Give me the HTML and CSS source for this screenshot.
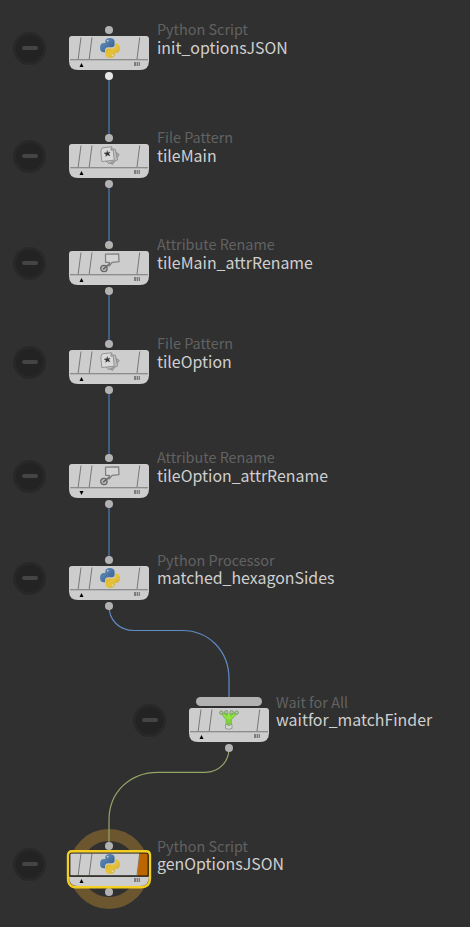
FILE: index.html
```html
<!DOCTYPE html>
<html lang="en">
<head>
<meta charset="utf-8">
<title>Node network</title>
<link rel="stylesheet" href="styles.css">
</head>
<body>
<svg class="defs" width="0" height="0">
  <defs>
    <linearGradient id="blue" x1="0" y1="0" x2="1" y2="1"><stop offset="0" stop-color="#3d689b"/><stop offset=".35" stop-color="#5680ad"/><stop offset="1" stop-color="#31588a"/></linearGradient>
    <linearGradient id="gold" x1="0" y1="0" x2="1" y2="1"><stop offset="0" stop-color="#dcae20"/><stop offset=".5" stop-color="#e6c33a"/><stop offset="1" stop-color="#c6a445"/></linearGradient>
    <symbol id="body" viewBox="0 0 80 34">
      <path d="M3 0H77Q80 0 80 3V25Q80 34 71 34H9Q0 34 0 25V3Q0 0 3 0Z" fill="#cdcdcd"/>
      <path d="M12 1.5 9.2 23M23 1.5 20.2 23M70.700 1.500 68 23" stroke="#777" stroke-width="1"/>
      <path d="M1 23.700H79" stroke="#777" stroke-width="1.100"/>
      <path d="M65 26h2v4h-2zM67.600 26h1.400v4h-1.400zM69.600 26h1.400v4h-1.400z" fill="#7c7c7c"/>
    </symbol>
    <symbol id="python" viewBox="0 0 20 20">
      <path d="M9.800 0C7 0 5.300 1.300 5.300 3.500V5H4C1.600 5 0 6.800 0 9.800S1.500 14.300 3.800 14.300H5V12.500C5 10.400 6.300 9.200 8.400 9.200H12C13.600 9.200 14.600 8 14.600 6.400V3.500C14.600 1.300 12.600 0 9.800 0Z" fill="url(#blue)"/>
      <path d="M10.200 20C13 20 14.900 18.700 14.900 16.500V15H16C18.500 15 20 13.200 20 10.200S18.500 5.400 16.200 5.400H15.300V7.500C15.300 9.400 13.900 10.600 11.800 10.600H8.200C6.600 10.600 5.500 11.700 5.500 13.300V16.500C5.500 18.700 7.400 20 10.200 20Z" fill="url(#gold)"/>
      <circle cx="7.700" cy="2.700" r=".9" fill="#bacbdc"/><circle cx="12.500" cy="17.300" r=".9" fill="#eee2b0"/>
    </symbol>
    <symbol id="files" viewBox="0 0 20 20">
      <g stroke="#858585" stroke-width=".8">
        <path d="M10 2 19.200 8.500 12.500 18.500 5 14Z" fill="#aaa"/>
        <path d="M6 1.500 15.500 3.500 17.500 14 8.500 17.500 5 14Z" fill="#bebebe"/>
        <path d="M2.300 1.800 11.500.8 13.200 4 14.200 14.200 1.800 15.500 .8 5Z" fill="#dadada"/>
        <path d="M11.500.8 10.800 4.200 13.200 4" fill="#bbb"/>
      </g>
      <path d="M7.300 4.400 7.900 6.700 10.200 6 8.800 7.800 10 9.900 7.500 8.900 5.600 10.400 6 8.200 4 7 6.500 6.700Z" fill="#333" stroke="#333" stroke-width=".3"/>
    </symbol>
    <symbol id="rename" viewBox="0 0 20 20">
      <path d="M4.200 15.500 10.200 10.200" stroke="#6b6b6b" stroke-width="1.600"/>
      <path d="M5.500 1.200 18.600.8 19 8.600 12.300 9.300 9 13 9.500 9.300 5.600 9.300Z" fill="#d4d4d4" stroke="#808080" stroke-width="1.300" stroke-linejoin="round"/>
      <circle cx="3.900" cy="15.500" r="3.200" fill="#b5b5b5" stroke="#666" stroke-width="1.300"/>
      <path d="M3.200 16.200 6 13.800" stroke="#555" stroke-width="1.200"/>
    </symbol>
    <symbol id="wait" viewBox="0 0 20 20">
      <path d="M2 3.500 7 9.500V14.500H12.500V9.500L18 3.500 15 3 12 4H8L5 3Z" fill="#80d639" stroke="#72b34a" stroke-width=".7"/>
      <path d="M4.500 4.500 9 9 9.600 4 10.500 9 15.500 4.500" fill="none" stroke="#a1ed50" stroke-width="1"/>
      <g fill="#b4c9a9" stroke="#6f8f60" stroke-width=".8"><circle cx="2.300" cy="2.600" r="1.700"/><circle cx="7.200" cy="2.300" r="1.700"/><circle cx="12.700" cy="2.300" r="1.700"/><circle cx="17.700" cy="2.600" r="1.700"/></g>
      <path d="M6.500 14.500H13V18.500Q9.800 20 6.500 18.500Z" fill="#d2d7cf" stroke="#87907f" stroke-width=".8"/>
      <path d="M8.500 12.500H11V16H8.500Z" fill="#80bd55"/>
    </symbol>
  </defs>
</svg>
<main class="canvas">
  <svg class="wires" width="470" height="927" viewBox="0 0 470 927">
    <circle class="halo" cx="109" cy="869" r="34"/>
    <g class="straight"><path d="M109 76V137M109 184V245M109 291V344M109 390V458M109 504V560"/></g>
    <path class="blue" d="M109 606C109 620 119 630.500 134 630.500H182C209 630.500 229 651 229 679V699"/>
    <path class="green" d="M229 748C229 762 219 772.300 205 772.300H158C130 772.300 109 792 109 820V846"/>
  </svg>

  <section class="node n1 ready">
    <i class="bypass"></i><i class="port in"></i><i class="port out"></i>
    <svg class="shape" width="80" height="34"><use href="#body"/><path d="M12.500 27 14.500 31H10.500Z"/></svg>
    <svg class="icon" width="20" height="20"><use href="#python"/></svg>
    <div class="label"><div class="type">Python Script</div><div class="name">init_optionsJSON</div></div>
  </section>
  <section class="node n2">
    <i class="bypass"></i><i class="port in"></i><i class="port out"></i>
    <svg class="shape" width="80" height="34"><use href="#body"/><path d="M12.500 27 14.500 31H10.500Z"/></svg>
    <svg class="icon" width="20" height="20"><use href="#files"/></svg>
    <div class="label"><div class="type">File Pattern</div><div class="name">tileMain</div></div>
  </section>
  <section class="node n3">
    <i class="bypass"></i><i class="port in"></i><i class="port out"></i>
    <svg class="shape" width="80" height="34"><use href="#body"/><path d="M12.500 27 14.500 31H10.500Z"/></svg>
    <svg class="icon" width="20" height="20"><use href="#rename"/></svg>
    <div class="label"><div class="type">Attribute Rename</div><div class="name">tileMain_attrRename</div></div>
  </section>
  <section class="node n4">
    <i class="bypass"></i><i class="port in"></i><i class="port out"></i>
    <svg class="shape" width="80" height="34"><use href="#body"/><path d="M12.500 27 14.500 31H10.500Z"/></svg>
    <svg class="icon" width="20" height="20"><use href="#files"/></svg>
    <div class="label"><div class="type">File Pattern</div><div class="name">tileOption</div></div>
  </section>
  <section class="node n5">
    <i class="bypass"></i><i class="port in"></i><i class="port out"></i>
    <svg class="shape" width="80" height="34"><use href="#body"/><path d="M12.500 31 14.500 27H10.500Z"/></svg>
    <svg class="icon" width="20" height="20"><use href="#rename"/></svg>
    <div class="label"><div class="type">Attribute Rename</div><div class="name">tileOption_attrRename</div></div>
  </section>
  <section class="node n6">
    <i class="bypass"></i><i class="port in"></i><i class="port out"></i>
    <svg class="shape" width="80" height="34"><use href="#body"/><path d="M12.500 27 14.500 31H10.500Z"/></svg>
    <svg class="icon" width="20" height="20"><use href="#python"/></svg>
    <div class="label"><div class="type">Python Processor</div><div class="name">matched_hexagonSides</div></div>
  </section>
  <section class="node n7">
    <i class="bypass"></i><i class="port multi"></i><i class="port out"></i>
    <svg class="shape" width="80" height="34"><use href="#body"/><path d="M12.500 27 14.500 31H10.500Z"/></svg>
    <svg class="icon" width="20" height="20"><use href="#wait"/></svg>
    <div class="label"><div class="type">Wait for All</div><div class="name">waitfor_matchFinder</div></div>
  </section>
  <section class="node n8">
    <i class="bypass"></i><i class="port in"></i><i class="port out"></i>
    <svg class="shape" width="80" height="34"><use href="#body"/><path d="M12.500 27 14.500 31H10.500Z"/>
      <path class="flag" d="M70.500 1H79V24H68.500Z"/>
      <path class="inner" d="M.7 24.200V3Q.7 .9 2.700 .9H77.300Q79.300 .9 79.300 3V24.200Z"/>
      <path class="selected" d="M3 -.7H77Q81 -.7 81 3.300V26.300Q81 35.300 72 35.300H8Q-1 35.300 -1 26.300V3.300Q-1 -.7 3 -.7Z"/>
    </svg>
    <svg class="icon" width="20" height="20"><use href="#python"/></svg>
    <div class="label"><div class="type">Python Script</div><div class="name">genOptionsJSON</div></div>
  </section>
</main>
</body>
</html>
```
FILE: styles.css
```css
body {
  margin: 0;
  background: #303030;
  font-family: "Noto Sans CJK SC", "Noto Sans", sans-serif;
}
.defs { position: absolute; }
.canvas {
  position: relative;
  width: 470px;
  height: 927px;
  overflow: hidden;
}
.wires { position: absolute; inset: 0; fill: none; }
.wires .halo { stroke: #6c5630; stroke-width: 12; }
.straight { stroke: #41648c; stroke-width: 1.8; }
.blue { stroke: #5f8bc4; stroke-width: 1.2; }
.green { stroke: #94a568; stroke-width: 1.2; }

.node { position: absolute; left: 69px; width: 80px; height: 34px; }
.n1 { top: 36px; }
.n2 { top: 144px; }
.n3 { top: 251px; }
.n4 { top: 350px; }
.n5 { top: 464px; }
.n6 { top: 566px; }
.n7 { top: 708px; left: 189px; }
.n8 { top: 852px; }

.bypass {
  position: absolute;
  left: -56px;
  top: -4.500px;
  box-sizing: border-box;
  width: 33px;
  height: 33px;
  border: 3px solid #282828;
  border-radius: 50%;
  background: #232323;
}
.bypass::after {
  content: "";
  position: absolute;
  left: 5.500px;
  top: 11px;
  width: 16px;
  height: 4px;
  border-radius: 2px;
  background: #434545;
}
.port {
  position: absolute;
  left: 36px;
  width: 8px;
  height: 8px;
  border-radius: 50%;
  background: #b2b2b2;
}
.in { top: -10.500px; }
.out { top: 36.300px; }
.ready .out { background: #e6e6e6; }
.multi { left: 7px; top: -11px; width: 66px; height: 9px; border-radius: 4.500px; }
.shape { position: absolute; left: 0; top: 0; overflow: visible; }
.icon { position: absolute; left: 31px; top: 2px; overflow: visible; }
.n7 .icon { left: 30px; }
.flag { fill: #bd6500; }
.inner { fill: none; stroke: #110c04; stroke-width: 1.3; }
.selected { fill: none; stroke: #f3cd20; stroke-width: 2.4; }

.label {
  position: absolute;
  left: 88px;
  top: -16px;
  white-space: nowrap;
  line-height: 18px;
}
.type { height: 19px; font-size: 14.4px; color: #626262; }
.name { font-size: 15.900px; color: #cfcfcf; }
.n6 .label, .n7 .label, .n8 .label { top: -15px; }
.n6 .type, .n7 .type, .n8 .type { height: 18px; }
.n7 .label { left: 87px; }
```
